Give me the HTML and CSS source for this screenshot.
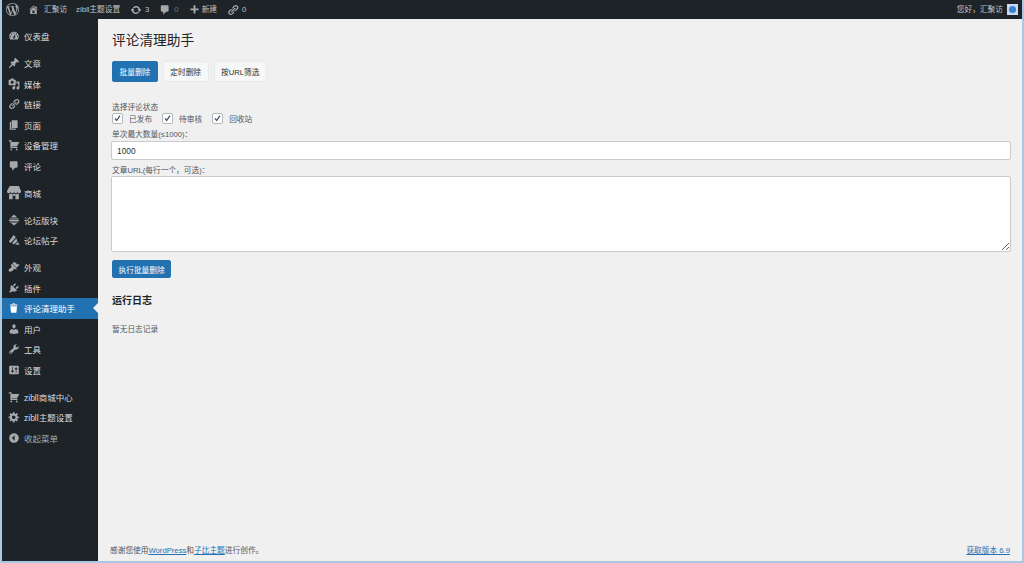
FILE: index.html
```html
<!DOCTYPE html>
<html lang="zh-CN">
<head>
<meta charset="utf-8">
<title>评论清理助手</title>
<link rel="stylesheet" href="styles.css">
</head>
<body>
<svg class="sprite" xmlns="http://www.w3.org/2000/svg">
<symbol id="i-wp" viewBox="0 0 20 20"><path d="M20 10c0-5.51-4.49-10-10-10C4.48 0 0 4.49 0 10c0 5.52 4.48 10 10 10 5.51 0 10-4.48 10-10zM7.78 15.37L4.37 6.22c.55-.02 1.17-.08 1.17-.08.5-.06.44-1.13-.06-1.11 0 0-1.45.11-2.37.11-.18 0-.37 0-.58-.01C4.12 2.69 6.87 1.11 10 1.11c2.33 0 4.45.87 6.05 2.34-.68-.11-1.65.39-1.65 1.58 0 .74.45 1.36.9 2.1.35.61.55 1.36.55 2.46 0 1.49-1.4 5-1.4 5l-3.03-8.37c.54-.02.82-.17.82-.17.5-.05.44-1.25-.06-1.22 0 0-1.44.12-2.38.12-.87 0-2.33-.12-2.33-.12-.5-.03-.56 1.2-.06 1.22l.92.08 1.26 3.41zM17.41 10c.24-.64.74-1.87.43-4.25.7 1.29 1.05 2.71 1.05 4.25 0 3.29-1.73 6.24-4.4 7.78.97-2.59 1.94-5.2 2.92-7.78zM6.1 18.09C3.12 16.65 1.11 13.53 1.11 10c0-1.3.23-2.48.72-3.59C3.25 10.3 4.67 14.2 6.1 18.09zm4.03-6.63l2.58 6.98c-.86.29-1.76.45-2.71.45-.79 0-1.57-.11-2.29-.33.81-2.38 1.62-4.74 2.42-7.1z"/></symbol>
<symbol id="i-home" viewBox="0 0 20 20"><path d="M16 8.5l1.53 1.53-1.06 1.06L10 4.62l-6.47 6.47-1.06-1.06L10 2.5l4 4v-2h2v4zm-6-2.46l6 5.99V18H4v-5.97zM12 17v-5H8v5h4z"/></symbol>
<symbol id="i-update" viewBox="0 0 20 20"><path d="M10.2 3.28c3.53 0 6.43 2.61 6.92 6h2.08l-3.5 4-3.5-4h2.32c-.45-1.97-2.21-3.45-4.32-3.45-1.45 0-2.73.71-3.54 1.78L4.95 5.66C6.23 4.2 8.11 3.28 10.2 3.28zm-.4 13.44c-3.52 0-6.43-2.61-6.92-6H.8l3.5-4c1.17 1.33 2.33 2.67 3.5 4H5.48c.45 1.97 2.21 3.45 4.32 3.45 1.45 0 2.73-.71 3.54-1.78l1.71 1.95c-1.28 1.46-3.15 2.38-5.25 2.38z"/></symbol>
<symbol id="i-comment" viewBox="0 0 20 20"><path d="M5 2h9c1.1 0 2 .9 2 2v7c0 1.1-.9 2-2 2h-2l-5 5v-5H5c-1.1 0-2-.9-2-2V4c0-1.1.9-2 2-2z"/></symbol>
<symbol id="i-plus" viewBox="0 0 20 20"><path d="M17.500 8v3.500H11.700v5.800H8.300v-5.800H2.500V8h5.800V2.200h3.400V8z"/></symbol>
<symbol id="i-link" viewBox="0 0 20 20"><path d="M17.74 2.76c1.68 1.69 1.68 4.41 0 6.1l-1.53 1.52c-1.12 1.12-2.7 1.47-4.14 1.09l2.62-2.61.76-.77.76-.76c.84-.84.84-2.2 0-3.04-.84-.85-2.2-.85-3.04 0l-.77.76-3.38 3.38c-.37-1.44-.02-3.02 1.1-4.14l1.52-1.53c1.69-1.68 4.42-1.68 6.1 0zM8.59 13.43l5.34-5.34c.42-.42.42-1.1 0-1.52-.44-.43-1.13-.39-1.53 0l-5.33 5.34c-.42.42-.42 1.1 0 1.52.44.43 1.13.39 1.52 0zm-.76 2.29l4.14-4.15c.38 1.44.03 3.02-1.09 4.14l-1.52 1.53c-1.69 1.68-4.41 1.68-6.1 0-1.68-1.68-1.68-4.42 0-6.1l1.53-1.52c1.12-1.12 2.7-1.47 4.14-1.1l-4.14 4.15c-.85.84-.85 2.2 0 3.05.84.84 2.2.84 3.04 0z"/></symbol>
<symbol id="i-dash" viewBox="0 0 20 20"><path d="M3.76 16h12.48c1.1-1.37 1.76-3.11 1.76-5 0-4.42-3.58-8-8-8s-8 3.58-8 8c0 1.89.66 3.63 1.76 5zM10 4c.55 0 1 .45 1 1s-.45 1-1 1-1-.45-1-1 .45-1 1-1zM6 6c.55 0 1 .45 1 1s-.45 1-1 1-1-.45-1-1 .45-1 1-1zm8 0c.55 0 1 .45 1 1s-.45 1-1 1-1-.45-1-1 .45-1 1-1zm-5.37 5.55L12 7v6c0 1.1-.9 2-2 2s-2-.9-2-2c0-.57.24-1.08.63-1.45zM4 10c.55 0 1 .45 1 1s-.45 1-1 1-1-.45-1-1 .45-1 1-1zm12 0c.55 0 1 .45 1 1s-.45 1-1 1-1-.45-1-1 .45-1 1-1zm-5 3c0-.55-.45-1-1-1s-1 .45-1 1 .45 1 1 1 1-.45 1-1z"/></symbol>
<symbol id="i-pin" viewBox="0 0 20 20"><path d="M10.44 3.02l1.82-1.82 6.36 6.35-1.83 1.82c-1.05-.68-2.48-.57-3.41.36l-.75.75c-.92.93-1.04 2.35-.35 3.41l-1.83 1.82-2.41-2.41-2.8 2.79c-.42.42-3.38 2.71-3.8 2.29s1.86-3.39 2.28-3.81l2.79-2.79L4.1 9.36l1.83-1.82c1.05.69 2.48.57 3.4-.36l.75-.75c.93-.92 1.05-2.35.36-3.41z"/></symbol>
<symbol id="i-media" viewBox="0 0 20 20"><path d="M13 11V4c0-.55-.45-1-1-1h-1.67L9 1H5L3.67 3H2c-.55 0-1 .45-1 1v7c0 .55.45 1 1 1h10c.55 0 1-.45 1-1zM7 4.5c1.38 0 2.5 1.12 2.5 2.5S8.38 9.5 7 9.5 4.5 8.38 4.5 7 5.62 4.5 7 4.5zM14 6h5v10.5c0 1.38-1.12 2.5-2.5 2.5S14 17.88 14 16.5s1.12-2.5 2.5-2.5c.17 0 .34.02.5.05V9h-3V6zm-4 8.05V13h2v3.5c0 1.38-1.12 2.5-2.5 2.5S7 17.88 7 16.5 8.12 14 9.5 14c.17 0 .34.02.5.05z"/></symbol>
<symbol id="i-page" viewBox="0 0 20 20"><path d="M6 15V2h10v13H6zm-1 1h8v2H3V5h2v11z"/></symbol>
<symbol id="i-cart" viewBox="0 0 20 20"><path d="M6 13h9c.55 0 1 .45 1 1s-.45 1-1 1H5c-.55 0-1-.45-1-1V4H2c-.55 0-1-.45-1-1s.45-1 1-1h3c.55 0 1 .45 1 1v2h13l-4 7H6v1zm-.5 3c.83 0 1.5.67 1.5 1.5S6.33 19 5.5 19 4 18.33 4 17.5 4.67 16 5.5 16zm9 0c.83 0 1.5.67 1.5 1.5s-.67 1.5-1.5 1.5-1.5-.67-1.5-1.5.67-1.5 1.5-1.5z"/></symbol>
<symbol id="i-store" viewBox="0 0 20 20"><path d="M1 10c.41.29.96.43 1.5.43.55 0 1.09-.14 1.5-.43.62-.46 1-1.17 1-2 0 .83.37 1.54 1 2 .41.29.96.43 1.5.43.55 0 1.09-.14 1.5-.43.62-.46 1-1.17 1-2 0 .83.37 1.54 1 2 .41.29.96.43 1.51.43.54 0 1.08-.14 1.49-.43.62-.46 1-1.17 1-2 0 .83.37 1.54 1 2 .41.29.96.43 1.5.43.55 0 1.09-.14 1.5-.43.63-.46 1-1.17 1-2V7l-3-7H4L0 7v1c0 .83.37 1.54 1 2zm2 8.99h5v-5h4v5h5v-7c-.37-.05-.72-.22-1-.43-.63-.45-1-.73-1-1.56 0 .83-.38 1.11-1 1.56-.41.3-.95.43-1.49.44-.55 0-1.1-.14-1.51-.44-.63-.45-1-.73-1-1.56 0 .83-.38 1.11-1 1.56-.41.3-.95.43-1.5.44-.54 0-1.09-.14-1.5-.44-.63-.45-1-.73-1-1.57 0 .84-.38 1.12-1 1.57-.29.21-.63.38-1 .44v6.99z"/></symbol>
<symbol id="i-forum" viewBox="0 0 20 20"><path d="M10 1l5.500 5h-11zM2.500 7.500h15V9h-15zM1.500 10h17v1.500h-17zM3 12.500h14V14H3zM5 15h10l-5 4z"/></symbol>
<symbol id="i-post" viewBox="0 0 20 20"><path d="M9.500 1.500l3.500 4-8.500 9.500L1.500 12zM14 7l-7 8 2.500 2.500 6-5zM16.500 13.500l2.500 4.500h-7z"/></symbol>
<symbol id="i-brush" viewBox="0 0 20 20"><path d="M14.48 11.06L7.41 3.99l1.5-1.5c.5-.56 2.3-.47 3.51.32 1.21.8 1.43 1.28 2.91 2.1 1.18.64 2.45 1.26 4.45.85zm-.71.71L6.7 4.7 4.93 6.47c-.39.39-.39 1.02 0 1.41l1.06 1.06c.39.39.39 1.03 0 1.42-.6.6-1.43 1.11-2.21 1.69-.35.26-.7.53-1.01.84C1.43 13.25 1 14.38 1 15.5 1 16.75 2 18 3.5 18c2.19 0 4.58-1.7 5.79-3.23.55-.7.51-1.34.91-1.73.39-.39 1.02-.39 1.41 0l1.06 1.06c.39.39 1.02.39 1.41 0z"/></symbol>
<symbol id="i-plugin" viewBox="0 0 20 20"><path d="M13.11 4.36L9.87 7.6 8 5.730l3.24-3.24c.35-.34 1.05-.2 1.56.32.52.51.66 1.21.31 1.55zm-8 1.77l.91-1.12 9.01 9.01-1.19.84c-.71.71-2.63 1.16-3.82 1.16H6.14L4.9 17.26c-.59.59-1.54.59-2.12 0-.59-.58-.59-1.53 0-2.12l1.24-1.24v-3.88c0-1.13.4-3.19 1.09-3.89zm7.26 3.97l3.24-3.24c.34-.35 1.04-.21 1.55.31.52.51.66 1.21.31 1.55l-3.24 3.25z"/></symbol>
<symbol id="i-trash" viewBox="0 0 20 20"><path d="M12 4h3c.6 0 1 .4 1 1v1H3V5c0-.6.5-1 1-1h3c.2-1.1 1.3-2 2.500-2s2.300.9 2.500 2zM8 4h3c-.2-.6-.9-1-1.500-1S8.200 3.400 8 4zM4 7h11l-.9 10.100c0 .5-.5.9-1 .9H5.900c-.5 0-.9-.4-1-.9L4 7z"/></symbol>
<symbol id="i-user" viewBox="0 0 20 20"><path d="M10 9.250c-2.270 0-2.730-3.440-2.730-3.440C7 4.020 7.820 2 9.970 2c2.160 0 2.980 2.020 2.710 3.810 0 0-.41 3.440-2.680 3.440zm0 2.570L12.720 10c2.390 0 4.520 2.330 4.520 4.530v2.490s-3.650 1.130-7.240 1.130c-3.650 0-7.240-1.130-7.240-1.130v-2.490c0-2.250 1.940-4.480 4.470-4.480z"/></symbol>
<symbol id="i-tool" viewBox="0 0 20 20"><path d="M16.680 9.770c-1.340 1.340-3.300 1.670-4.950.99l-5.410 6.520c-.99.99-2.590.99-3.580 0s-.99-2.590 0-3.570l6.520-5.420c-.68-1.650-.35-3.610.99-4.950 1.280-1.280 3.120-1.620 4.720-1.060l-2.890 2.890 2.820 2.820 2.860-2.870c.53 1.580.18 3.390-1.080 4.650zM3.810 16.210c.4.39 1.040.39 1.430 0 .4-.4.4-1.040 0-1.430-.39-.4-1.030-.4-1.430 0-.39.39-.39 1.030 0 1.430z"/></symbol>
<symbol id="i-settings" viewBox="0 0 20 20"><path d="M18 16V4c0-.55-.45-1-1-1H3c-.55 0-1 .45-1 1v12c0 .55.45 1 1 1h14c.55 0 1-.45 1-1zM8 11h1c.55 0 1 .45 1 1s-.45 1-1 1H8v1.500c0 .28-.22.5-.5.5s-.5-.22-.5-.5V13H6c-.55 0-1-.45-1-1s.45-1 1-1h1V5.500c0-.28.22-.5.5-.5s.5.22.5.5V11zm5-2h-1c-.55 0-1-.45-1-1s.45-1 1-1h1V5.500c0-.28.22-.5.5-.5s.5.22.5.5V7h1c.55 0 1 .45 1 1s-.45 1-1 1h-1v5.500c0 .28-.22.5-.5.5s-.5-.22-.5-.5V9z"/></symbol>
<symbol id="i-gear" viewBox="0 0 20 20"><path d="M18 12h-2.180c-.17.7-.44 1.350-.81 1.930l1.540 1.540-2.100 2.100-1.540-1.540c-.58.36-1.230.63-1.910.79V19H8v-2.180c-.68-.16-1.330-.43-1.910-.79l-1.540 1.540-2.120-2.120 1.540-1.540c-.36-.58-.63-1.230-.79-1.910H1V9.030h2.170c.16-.7.44-1.350.8-1.940L2.430 5.550l2.100-2.100 1.540 1.540c.58-.37 1.240-.64 1.930-.81V2h3v2.180c.68.16 1.330.43 1.910.79l1.540-1.540 2.120 2.120-1.540 1.540c.36.59.64 1.240.8 1.940H18V12zm-8.500 1.500c1.660 0 3-1.340 3-3s-1.340-3-3-3-3 1.340-3 3 1.340 3 3 3z"/></symbol>
<symbol id="i-collapse" viewBox="0 0 20 20"><path d="M18 10c0-4.420-3.580-8-8-8s-8 3.580-8 8 3.580 8 8 8 8-3.580 8-8zm-7 4.500L6.500 10 11 5.500z"/></symbol>
<symbol id="i-check" viewBox="0 0 10 10"><path d="M2.200 5l1.900 2.100L7.800 1.800" fill="none" stroke="#3f5a72" stroke-width="1.400"/></symbol>
</svg>

<div class="frame">
  <header class="topbar">
    <div class="topbar-group">
      <svg class="tb-logo"><use href="#i-wp"/></svg>
      <span class="tb-item tb-home"><svg class="tb-icon"><use href="#i-home"/></svg>汇聚访</span>
      <span class="tb-item tb-site">zibll主题设置</span>
      <span class="tb-item"><svg class="tb-icon tb-icon-lg"><use href="#i-update"/></svg>3</span>
      <span class="tb-item tb-muted"><svg class="tb-icon tb-icon-lg"><use href="#i-comment"/></svg>0</span>
      <span class="tb-item"><svg class="tb-icon tb-icon-plus"><use href="#i-plus"/></svg>新建</span>
      <span class="tb-item"><svg class="tb-icon tb-icon-lg"><use href="#i-link"/></svg>0</span>
    </div>
    <div class="topbar-account">您好，汇聚访<span class="avatar"><span class="avatar-dot"></span></span></div>
  </header>

  <div class="shell">
    <nav class="sidebar">
      <ul class="menu">
        <li class="menu-item"><svg class="menu-icon"><use href="#i-dash"/></svg>仪表盘</li>
      </ul>
      <ul class="menu">
        <li class="menu-item"><svg class="menu-icon"><use href="#i-pin"/></svg>文章</li>
        <li class="menu-item"><svg class="menu-icon"><use href="#i-media"/></svg>媒体</li>
        <li class="menu-item"><svg class="menu-icon"><use href="#i-link"/></svg>链接</li>
        <li class="menu-item"><svg class="menu-icon"><use href="#i-page"/></svg>页面</li>
        <li class="menu-item"><svg class="menu-icon"><use href="#i-cart"/></svg>设备管理</li>
        <li class="menu-item"><svg class="menu-icon"><use href="#i-comment"/></svg>评论</li>
      </ul>
      <ul class="menu">
        <li class="menu-item"><svg class="menu-icon menu-icon-lg"><use href="#i-store"/></svg>商城</li>
      </ul>
      <ul class="menu">
        <li class="menu-item"><svg class="menu-icon"><use href="#i-forum"/></svg>论坛版块</li>
        <li class="menu-item"><svg class="menu-icon"><use href="#i-post"/></svg>论坛帖子</li>
      </ul>
      <ul class="menu">
        <li class="menu-item"><svg class="menu-icon"><use href="#i-brush"/></svg>外观</li>
        <li class="menu-item"><svg class="menu-icon"><use href="#i-plugin"/></svg>插件</li>
        <li class="menu-item menu-active"><svg class="menu-icon"><use href="#i-trash"/></svg>评论清理助手</li>
        <li class="menu-item"><svg class="menu-icon"><use href="#i-user"/></svg>用户</li>
        <li class="menu-item"><svg class="menu-icon"><use href="#i-tool"/></svg>工具</li>
        <li class="menu-item"><svg class="menu-icon"><use href="#i-settings"/></svg>设置</li>
      </ul>
      <ul class="menu">
        <li class="menu-item"><svg class="menu-icon"><use href="#i-cart"/></svg>zibll商城中心</li>
        <li class="menu-item"><svg class="menu-icon"><use href="#i-gear"/></svg>zibll主题设置</li>
        <li class="menu-item menu-collapse"><svg class="menu-icon"><use href="#i-collapse"/></svg>收起菜单</li>
      </ul>
    </nav>

    <main class="content">
      <div class="content-body">
        <h1 class="page-title">评论清理助手</h1>
        <div class="tabs">
          <button class="tab tab-active" type="button">批量删除</button>
          <button class="tab" type="button">定时删除</button>
          <button class="tab" type="button">按URL筛选</button>
        </div>
        <form class="form">
          <div class="field-label">选择评论状态</div>
          <div class="checks">
            <label class="check"><span class="box"><svg class="box-mark"><use href="#i-check"/></svg></span>已发布</label>
            <label class="check"><span class="box"><svg class="box-mark"><use href="#i-check"/></svg></span>待审核</label>
            <label class="check"><span class="box"><svg class="box-mark"><use href="#i-check"/></svg></span>回收站</label>
          </div>
          <label class="field-label field-max" for="max">单次最大数量(≤1000)：</label>
          <input class="text-input" id="max" type="text" value="1000">
          <label class="field-label field-url" for="urls">文章URL(每行一个，可选)：</label>
          <textarea class="text-area" id="urls"></textarea>
          <button class="run" type="button">执行批量删除</button>
        </form>
        <h2 class="log-title">运行日志</h2>
        <p class="log-empty">暂无日志记录</p>
      </div>
      <footer class="footer">
        <span>感谢您使用<a class="foot-link" href="#">WordPress</a>和<a class="foot-link" href="#">子比主题</a>进行创作。</span>
        <a class="foot-version" href="#">获取版本 6.9</a>
      </footer>
    </main>
  </div>
</div>
</body>
</html>
```
FILE: styles.css
```css
* { box-sizing: border-box; }
html, body { margin: 0; padding: 0; }
body {
  width: 1024px;
  height: 563px;
  overflow: hidden;
  background: #a9c9e2;
  font-family: "Liberation Sans", "Noto Sans CJK SC", sans-serif;
  font-size: 7.7px;
  color: #3c434a;
}
.sprite { display: none; }
.frame {
  display: flex;
  flex-direction: column;
  height: 561px;
  margin: 0 2px;
  background: #f0f0f1;
  overflow: hidden;
}
.topbar {
  flex: none;
  height: 19px;
  background: #1d2327;
  color: #c3c4c7;
  display: flex;
  justify-content: space-between;
  align-items: center;
  padding: 0 4px;
  fill: #a7aaad;
  line-height: 1;
}
.topbar-group { display: flex; align-items: center; }
.tb-logo { width: 13px; height: 13px; margin-right: 9px; }
.tb-item { display: flex; align-items: center; margin-right: 10px; white-space: nowrap; }
.tb-home { margin-right: 9px; }
.tb-site { margin-right: 10px; }
.tb-icon { width: 11px; height: 11px; margin-right: 5px; }
.tb-icon-lg { width: 12px; height: 12px; margin-right: 3px; }
.tb-icon-plus { margin-right: 2px; }
.tb-muted { color: #72777c; }
.topbar-account { display: flex; align-items: center; }
.avatar {
  width: 11px;
  height: 11px;
  margin-left: 4px;
  background: #c8d9f3;
  display: flex;
  align-items: center;
  justify-content: center;
}
.avatar-dot { width: 7px; height: 7px; border-radius: 50%; background: #3f7fd0; }
.shell { flex: 1; display: flex; min-height: 0; }
.sidebar {
  flex: none;
  width: 96px;
  background: #1d2327;
  padding-top: 7px;
}
.menu { list-style: none; margin: 0 0 6.5px; padding: 0; }
.menu-item {
  position: relative;
  height: 20.5px;
  display: flex;
  align-items: center;
  padding-left: 6px;
  color: #dcdcde;
  fill: #a7aaad;
  font-size: 8.5px;
  white-space: nowrap;
}
.menu-icon { width: 12px; height: 12px; margin-right: 4px; flex: none; }
.menu-icon-lg { width: 14px; height: 14px; margin: 0 3px 0 -1px; }
.menu-active { background: #2271b1; color: #fff; fill: #fff; }
.menu-active::after {
  content: "";
  position: absolute;
  right: 0;
  top: 50%;
  margin-top: -5px;
  border: 5px solid transparent;
  border-right-color: #f0f0f1;
  border-left-width: 0;
}
.menu-collapse { color: #a7aaad; }
.content { flex: 1; min-width: 0; display: flex; flex-direction: column; }
.content-body { flex: 1; padding: 12px 11px 0 14px; }
.page-title {
  margin: 0;
  font-size: 13.7px;
  font-weight: 400;
  line-height: 20px;
  color: #1d2327;
}
.tabs { display: flex; gap: 5px; margin-top: 10px; }
.tab {
  height: 21px;
  padding: 0 6.5px;
  border: 1px solid #e9e9ea;
  border-radius: 2px;
  background: #f6f7f7;
  color: #2c3338;
  font: 7.7px "Liberation Sans", "Noto Sans CJK SC", sans-serif;
}
.tab-active { background: #2271b1; border-color: #2271b1; color: #fff; }
.form { margin-top: 21px; }
.field-label { display: block; line-height: 10px; color: #50575e; }
.checks { display: flex; height: 14px; margin-top: -2px; align-items: center; }
.check { display: flex; align-items: center; margin-right: 10px; color: #50575e; }
.box {
  width: 10.5px;
  height: 11px;
  margin-right: 6.5px;
  background: #fff;
  border: 1px solid #b4b7bb;
  border-radius: 2px;
  display: flex;
  align-items: center;
  justify-content: center;
}
.box-mark { width: 9px; height: 9px; flex: none; }
.field-max { margin-top: 5px; }
.text-input {
  display: block;
  width: 900px;
  height: 19px;
  margin: 1px 0 0 -1px;
  padding: 0 5px;
  border: 1px solid #c9cacc;
  border-radius: 2px;
  background: #fff;
  color: #2c3338;
  font: 8.4px "Liberation Sans", sans-serif;
}
.field-url { margin-top: 6px; }
.text-area {
  display: block;
  width: 900px;
  height: 76px;
  margin: 0 0 0 -1px;
  border: 1px solid #c9cacc;
  border-radius: 2px;
  background: #fff;
}
.run {
  display: block;
  height: 18px;
  margin-top: 8px;
  padding: 0 5.5px;
  border: 1px solid #2271b1;
  border-radius: 2px;
  background: #2271b1;
  color: #fff;
  font: 7.7px "Liberation Sans", "Noto Sans CJK SC", sans-serif;
}
.log-title {
  margin: 16px 0 0;
  font-size: 10px;
  font-weight: 700;
  line-height: 14px;
  color: #1d2327;
}
.log-empty { margin: 16px 0 0; line-height: 11px; color: #50575e; }
.footer {
  flex: none;
  display: flex;
  justify-content: space-between;
  align-items: center;
  height: 12px;
  margin-bottom: 6px;
  padding: 0 12px;
  color: #50575e;
}
.foot-link { color: #2271b1; text-decoration: underline; }
.foot-version { color: #2271b1; text-decoration: underline; }
```
